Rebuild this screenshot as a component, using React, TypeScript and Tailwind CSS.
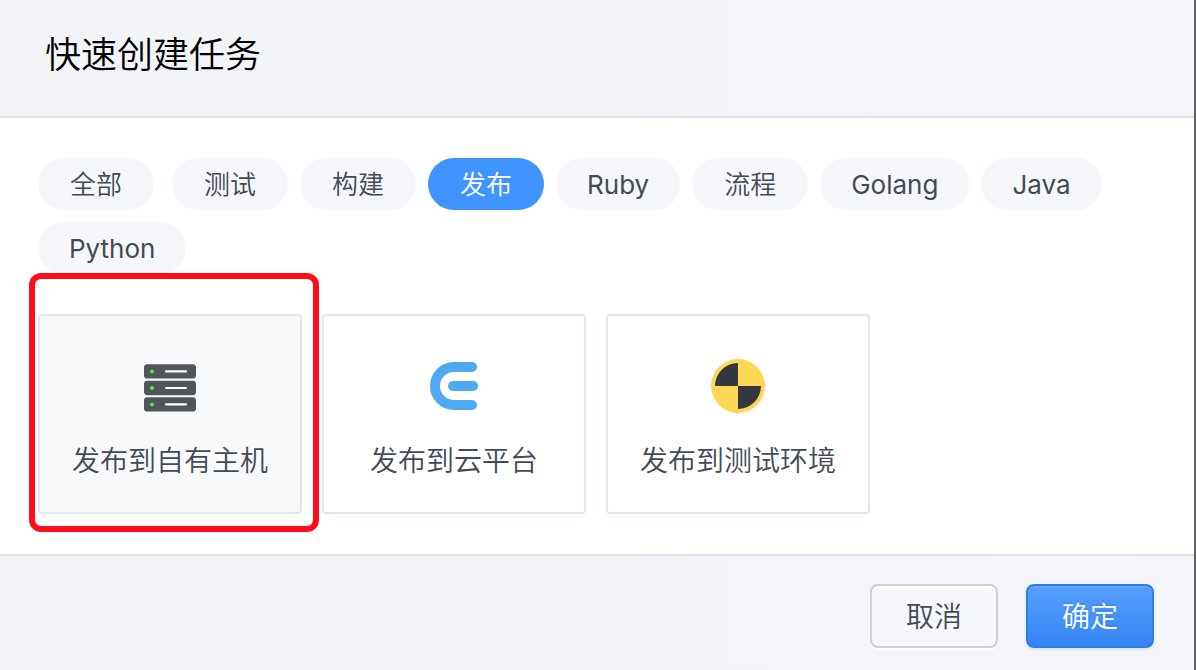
import { useState } from "react";
import type { ReactNode } from "react";
import clsx from "clsx";

const categories = ["全部", "测试", "构建", "发布", "Ruby", "流程", "Golang", "Java", "Python"];

const isLatin = (text: string) => /^[A-Za-z]+$/.test(text);

function ServerIcon() {
  return (
    <svg viewBox="0 0 56 56" className="size-14" aria-hidden="true">
      {[6.2, 22.8, 39.2].map((y) => (
        <g key={y}>
          <rect x="2" y={y} width="52" height="14.4" rx="3.4" fill="#4f5558" />
          <circle cx="10" cy={y + 7.2} r="2" fill="#5ae052" />
          <rect x="23" y={y + 6.1} width="22" height="2.2" rx="1" fill="#fff" />
        </g>
      ))}
    </svg>
  );
}

function CloudIcon() {
  return (
    <svg viewBox="0 0 56 56" className="size-14" aria-hidden="true">
      <g fill="none" stroke="#4ea8f2" strokeWidth="10" strokeLinecap="round">
        <path d="M46 9H28a19 19 0 0 0 0 38h18" />
        <path d="M27 28h20" />
      </g>
    </svg>
  );
}

function TestIcon() {
  return (
    <svg viewBox="0 0 56 56" className="size-14" aria-hidden="true">
      <circle cx="28" cy="28" r="27" fill="#ffd754" />
      <path d="M28 28V5A23 23 0 0 0 5 28zM28 28v23a23 23 0 0 0 23-23z" fill="#323740" />
    </svg>
  );
}

const tasks: { label: string; icon: ReactNode }[] = [
  { label: "发布到自有主机", icon: <ServerIcon /> },
  { label: "发布到云平台", icon: <CloudIcon /> },
  { label: "发布到测试环境", icon: <TestIcon /> },
];

export default function App() {
  const [category, setCategory] = useState("发布");
  const [selected, setSelected] = useState(0);

  return (
    <div className="flex min-h-screen flex-col border-r-2 border-[#5f6164] bg-white font-['Inter','Noto_Sans_CJK_SC',sans-serif] font-[350] text-[#434a54]">
      <header className="border-b-2 border-[#e3e4e6] bg-linear-to-r from-[#f2f4f8] to-[#f5f6fb] px-[45px] pt-[29px] pb-[35px]">
        <h1 className="text-4xl leading-[52px] font-[350] text-black">快速创建任务</h1>
      </header>

      <main className="grow px-[38px] py-10">
        <nav className="flex flex-wrap gap-3">
          {categories.map((name) => (
            <button
              key={name}
              type="button"
              aria-pressed={name === category}
              onClick={() => setCategory(name)}
              className={clsx(
                "h-[52px] rounded-full pt-0.5 text-[26px] leading-[50px] first:mr-1.5",
                isLatin(name) ? "px-[31px] font-normal" : "px-8",
                name === category ? "bg-[#3f94ff] text-white" : "bg-[#f5f7fb]",
              )}
            >
              {name}
            </button>
          ))}
        </nav>

        <div className="mt-10 flex flex-wrap gap-5">
          {tasks.map((task, index) => (
            <div key={task.label} className="relative">
              <button
                type="button"
                aria-pressed={index === selected}
                onClick={() => setSelected(index)}
                className={clsx(
                  "flex h-[200px] w-[264px] flex-col items-center rounded-sm border-2 border-[#e3e6ed] pt-[42px]",
                  index === selected ? "bg-[#f8f9fb]" : "bg-white",
                )}
              >
                {task.icon}
                <span className="mt-[27px] text-[28px] leading-10">{task.label}</span>
              </button>
              {index === selected && (
                <div className="pointer-events-none absolute -top-[41px] -right-[17px] -bottom-[18px] -left-[9px] rounded-xl border-6 border-[#ff0d1b]" />
              )}
            </div>
          ))}
        </div>
      </main>

      <footer className="flex justify-end gap-7 border-t-2 border-[#e3e4e6] bg-linear-to-r from-[#f2f4f8] to-[#f5f6fb] px-10 pt-7 pb-[22px]">
        <button
          type="button"
          className="h-16 w-32 rounded-lg border-2 border-[#cbd0d9] bg-[#f6f7fb] pt-0.5 text-[28px] leading-10 shadow-[0_2px_0_#fff,inset_0_2px_0_#fff]"
        >
          取消
        </button>
        <button
          type="button"
          className="h-16 w-32 rounded-lg border-2 border-[#2a7fee] bg-linear-to-b from-[#559ffc] to-[#3585f4] pt-0.5 text-[28px] leading-10 text-white shadow-[0_2px_3px_#00000014,inset_0_2px_0_#ffffff14] text-shadow-[0_-2px_0_#2a7fee80]"
        >
          确定
        </button>
      </footer>
    </div>
  );
}
